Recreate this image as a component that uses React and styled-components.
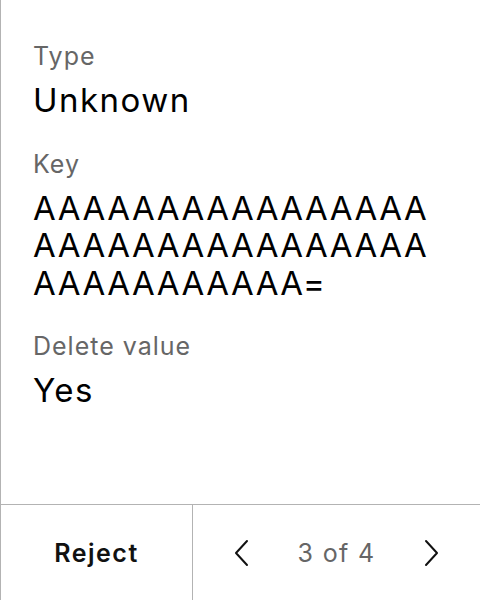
import React from "react";
import styled, { createGlobalStyle } from "styled-components";

const GlobalStyle = createGlobalStyle`
  html, body {
    margin: 0;
    padding: 0;
    background: #fff;
  }
  body {
    font-family: Inter, "Noto Sans", sans-serif;
  }
`;

const fields = [
  { label: "Type", value: "Unknown" },
  { label: "Key", value: "AAAAAAAAAAAAAAAAAAAAAAAAAAAAAAAAAAAAAAAAAAA=" },
  { label: "Delete value", value: "Yes" },
];

export default function App() {
  return (
    <>
      <GlobalStyle />
      <Panel>
        <Details>
          {fields.map((f) => (
            <Field key={f.label}>
              <Label>{f.label}</Label>
              <Value>{f.value}</Value>
            </Field>
          ))}
        </Details>
        <Footer>
          <RejectButton>Reject</RejectButton>
          <Pager>
            <ArrowButton aria-label="Previous">
              <Chevron points="14 2 3 14 14 26" />
            </ArrowButton>
            <PageText>3 of 4</PageText>
            <ArrowButton aria-label="Next">
              <Chevron points="4 2 15 14 4 26" />
            </ArrowButton>
          </Pager>
        </Footer>
      </Panel>
    </>
  );
}

function Chevron({ points }) {
  return (
    <svg width="18" height="28" viewBox="0 0 18 28" fill="none" stroke="#111" strokeWidth="2" strokeLinecap="round" strokeLinejoin="round">
      <polyline points={points} />
    </svg>
  );
}

const Panel = styled.div`
  height: 600px;
  display: flex;
  flex-direction: column;
  border-left: 1px solid #b3b3b3;
  box-sizing: border-box;
`;

const Details = styled.div`
  flex: 1;
  padding: 40px 32px 0 32px;
  display: flex;
  flex-direction: column;
  gap: 28px;
`;

const Field = styled.div`
  display: flex;
  flex-direction: column;
  gap: 10px;
`;

const Label = styled.div`
  font-size: 25px;
  line-height: 32px;
  letter-spacing: 0.04em;
  color: #666;
`;

const Value = styled.div`
  font-size: 33px;
  line-height: 37.5px;
  letter-spacing: 0.045em;
  color: #000;
  word-break: break-all;
`;

const Footer = styled.div`
  height: 96px;
  box-sizing: border-box;
  border-top: 1px solid #b3b3b3;
  display: grid;
  grid-template-columns: 192px 1fr;
`;

const RejectButton = styled.button`
  border: none;
  border-right: 1px solid #b3b3b3;
  background: none;
  font-family: Inter, sans-serif;
  font-size: 25px;
  font-weight: 600;
  letter-spacing: 0.06em;
  color: #111;
  padding: 0;
`;

const Pager = styled.div`
  display: flex;
  align-items: center;
  justify-content: center;
  gap: 46px;
`;

const ArrowButton = styled.button`
  border: none;
  background: none;
  padding: 0;
  display: flex;
  align-items: center;
`;

const PageText = styled.span`
  font-size: 25px;
  letter-spacing: 0.055em;
  color: #666;
`;
